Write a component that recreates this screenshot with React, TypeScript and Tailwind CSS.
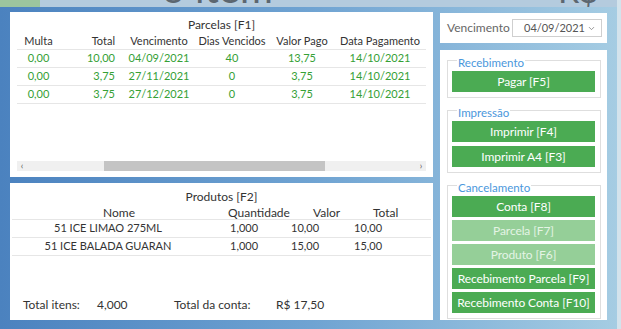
import { ChevronDown } from 'lucide-react'

const parcelas = [
  { multa: '0,00', total: '10,00', venc: '04/09/2021', dias: '40', pago: '13,75', data: '14/10/2021' },
  { multa: '0,00', total: '3,75', venc: '27/11/2021', dias: '0', pago: '3,75', data: '14/10/2021' },
  { multa: '0,00', total: '3,75', venc: '27/12/2021', dias: '0', pago: '3,75', data: '14/10/2021' },
]

const produtos = [
  { nome: '51 ICE LIMAO 275ML', qtd: '1,000', valor: '10,00', total: '10,00' },
  { nome: '51 ICE BALADA GUARAN', qtd: '1,000', valor: '15,00', total: '15,00' },
]

function Cell({ w, children, right }: { w: string; children: React.ReactNode; right?: boolean }) {
  return (
    <div className={`${w} flex ${right ? 'justify-end pr-[5px]' : 'justify-center'} whitespace-nowrap`}>
      {children}
    </div>
  )
}

function ParcelaRow({ cols, green, h }: { cols: string[]; green?: boolean; h: string }) {
  return (
    <div className={`flex items-center ${h} border-b border-[#e6e6e6] ${green ? 'text-[#35a035]' : 'text-[#333]'}`}>
      <Cell w="w-[43px]">{cols[0]}</Cell>
      <Cell w="w-[60px]" right>{cols[1]}</Cell>
      <Cell w="w-[78px]">{cols[2]}</Cell>
      <Cell w="w-[68px]">{cols[3]}</Cell>
      <Cell w="w-[72px]">{cols[4]}</Cell>
      <Cell w="w-[84px]">{cols[5]}</Cell>
    </div>
  )
}

function Group({ title, children, className }: { title: string; children: React.ReactNode; className?: string }) {
  return (
    <div className={`relative border border-[#dedede] pt-[10px] pb-[5px] pl-[4px] pr-[5px] flex flex-col gap-[3px] ${className ?? ''}`}>
      <span className="absolute left-[9px] top-[-5px] bg-white px-[1px] text-[11.5px] leading-[13px] text-[#4a97dc]">
        {title}
      </span>
      {children}
    </div>
  )
}

function Btn({ label, disabled }: { label: string; disabled?: boolean }) {
  return (
    <button
      className={`h-[21px] w-full whitespace-nowrap text-[12px] tracking-[-0.1px] leading-[21px] ${disabled ? 'bg-[#95cf98] text-[#e4f4e5]' : 'bg-[#4bab53] text-white'}`}
    >
      {label}
    </button>
  )
}

export default function App() {
  return (
    <div
      className="w-[621px] h-[329px] overflow-hidden flex bg-gradient-to-r from-[#4b82bf] via-[#6fa3d2] to-[#a6cde3] text-[11px]"
      style={{ fontFamily: 'Lato, "Noto Sans", sans-serif' }}
    >
      <div className="flex-1 flex flex-col">
        {/* stuff behind the window */}
        <div className="h-[7px] bg-[#b4cbde] overflow-hidden flex">
          <div className="w-[40px] bg-[#9cc59e]" />
          <div className="ml-[122px] text-[40px] leading-[20px] mt-[-22px] text-[#5c6670]">o item</div>
          <div className="ml-auto mr-[18px] text-[34px] leading-[20px] mt-[-20px] text-[#5c6670]">R$</div>
        </div>

        <div className="flex pt-[5px] pl-[10px] gap-[7px]">
          {/* left column */}
          <div className="w-[423px] flex flex-col gap-[6px]">
            {/* Parcelas */}
            <div className="h-[165px] bg-white flex flex-col pt-[4px]">
              <div className="h-[18px] leading-[18px] text-center text-[12px] text-[#333]">Parcelas [F1]</div>
              <div className="px-[7px]">
                <ParcelaRow h="h-[16px]" cols={['Multa', 'Total', 'Vencimento', 'Dias Vencidos', 'Valor Pago', 'Data Pagamento']} />
                {parcelas.map((p, i) => (
                  <ParcelaRow key={i} h="h-[18px]" green cols={[p.multa, p.total, p.venc, p.dias, p.pago, p.data]} />
                ))}
              </div>
              <div className="mt-auto mb-[6px] mx-[7px] h-[10px] bg-[#f0f0f0] flex items-center text-[9px] text-[#555]">
                <span className="w-[10px] text-center leading-[10px]">‹</span>
                <div className="ml-[77px] w-[221px] h-full bg-[#c4c4c4]" />
                <span className="ml-auto w-[10px] text-center leading-[10px]">›</span>
              </div>
            </div>

            {/* Produtos */}
            <div className="h-[137px] bg-white flex flex-col pt-[5px] text-[#333]">
              <div className="h-[18px] leading-[18px] text-center text-[12px]">Produtos [F2]</div>
              <div className="mx-[2px]">
                <div className="h-[14px] flex items-center border-b border-[#e6e6e6] text-[12px] whitespace-nowrap">
                  <div className="w-[216px] pl-[91px]">Nome</div>
                  <div className="w-[85px]">Quantidade</div>
                  <div className="w-[60px]">Valor</div>
                  <div>Total</div>
                </div>
                {produtos.map((p, i) => (
                  <div key={i} className="h-[18px] flex items-center border-b border-[#e6e6e6] whitespace-nowrap">
                    <div className="w-[192px] text-center">{p.nome}</div>
                    <div className="w-[61px] ml-[26px]">{p.qtd}</div>
                    <div className="w-[63px]">{p.valor}</div>
                    <div>{p.total}</div>
                  </div>
                ))}
              </div>
              <div className="mt-auto mb-[6px] h-[18px] flex items-center pl-[13px] text-[12px] whitespace-nowrap">
                <div className="w-[74px]">Total itens:</div>
                <div className="w-[77px]">4,000</div>
                <div className="w-[102px]">Total da conta:</div>
                <div>R$ 17,50</div>
              </div>
            </div>
          </div>

          {/* right column */}
          <div className="w-[167px] mt-[1px] flex flex-col gap-[7px]">
            <div className="h-[30px] bg-white flex items-center pl-[7px]">
              <span className="w-[65px] text-[12px] text-[#666]">Vencimento</span>
              <div className="w-[90px] h-[18px] border border-[#cfcfcf] flex items-center text-[11px] text-[#555]">
                <span className="ml-[11px]">04/09/2021</span>
                <ChevronDown size={9} className="ml-auto mr-[5px] text-[#777]" strokeWidth={2} />
              </div>
            </div>

            <div className="h-[270px] bg-white pt-[10px] pl-[7px] pr-[6px] flex flex-col gap-[12px]">
              <Group title="Recebimento">
                <Btn label="Pagar [F5]" />
              </Group>
              <Group title="Impressão" className="gap-[4px]">
                <Btn label="Imprimir [F4]" />
                <Btn label="Imprimir A4 [F3]" />
              </Group>
              <Group title="Cancelamento">
                <Btn label="Conta [F8]" />
                <Btn label="Parcela [F7]" disabled />
                <Btn label="Produto [F6]" disabled />
                <Btn label="Recebimento Parcela [F9]" />
                <Btn label="Recebimento Conta [F10]" />
              </Group>
            </div>
          </div>
        </div>
      </div>
      {/* neighbouring window edge */}
      <div className="w-[4px] bg-[#d3e3ec]" />
    </div>
  )
}
